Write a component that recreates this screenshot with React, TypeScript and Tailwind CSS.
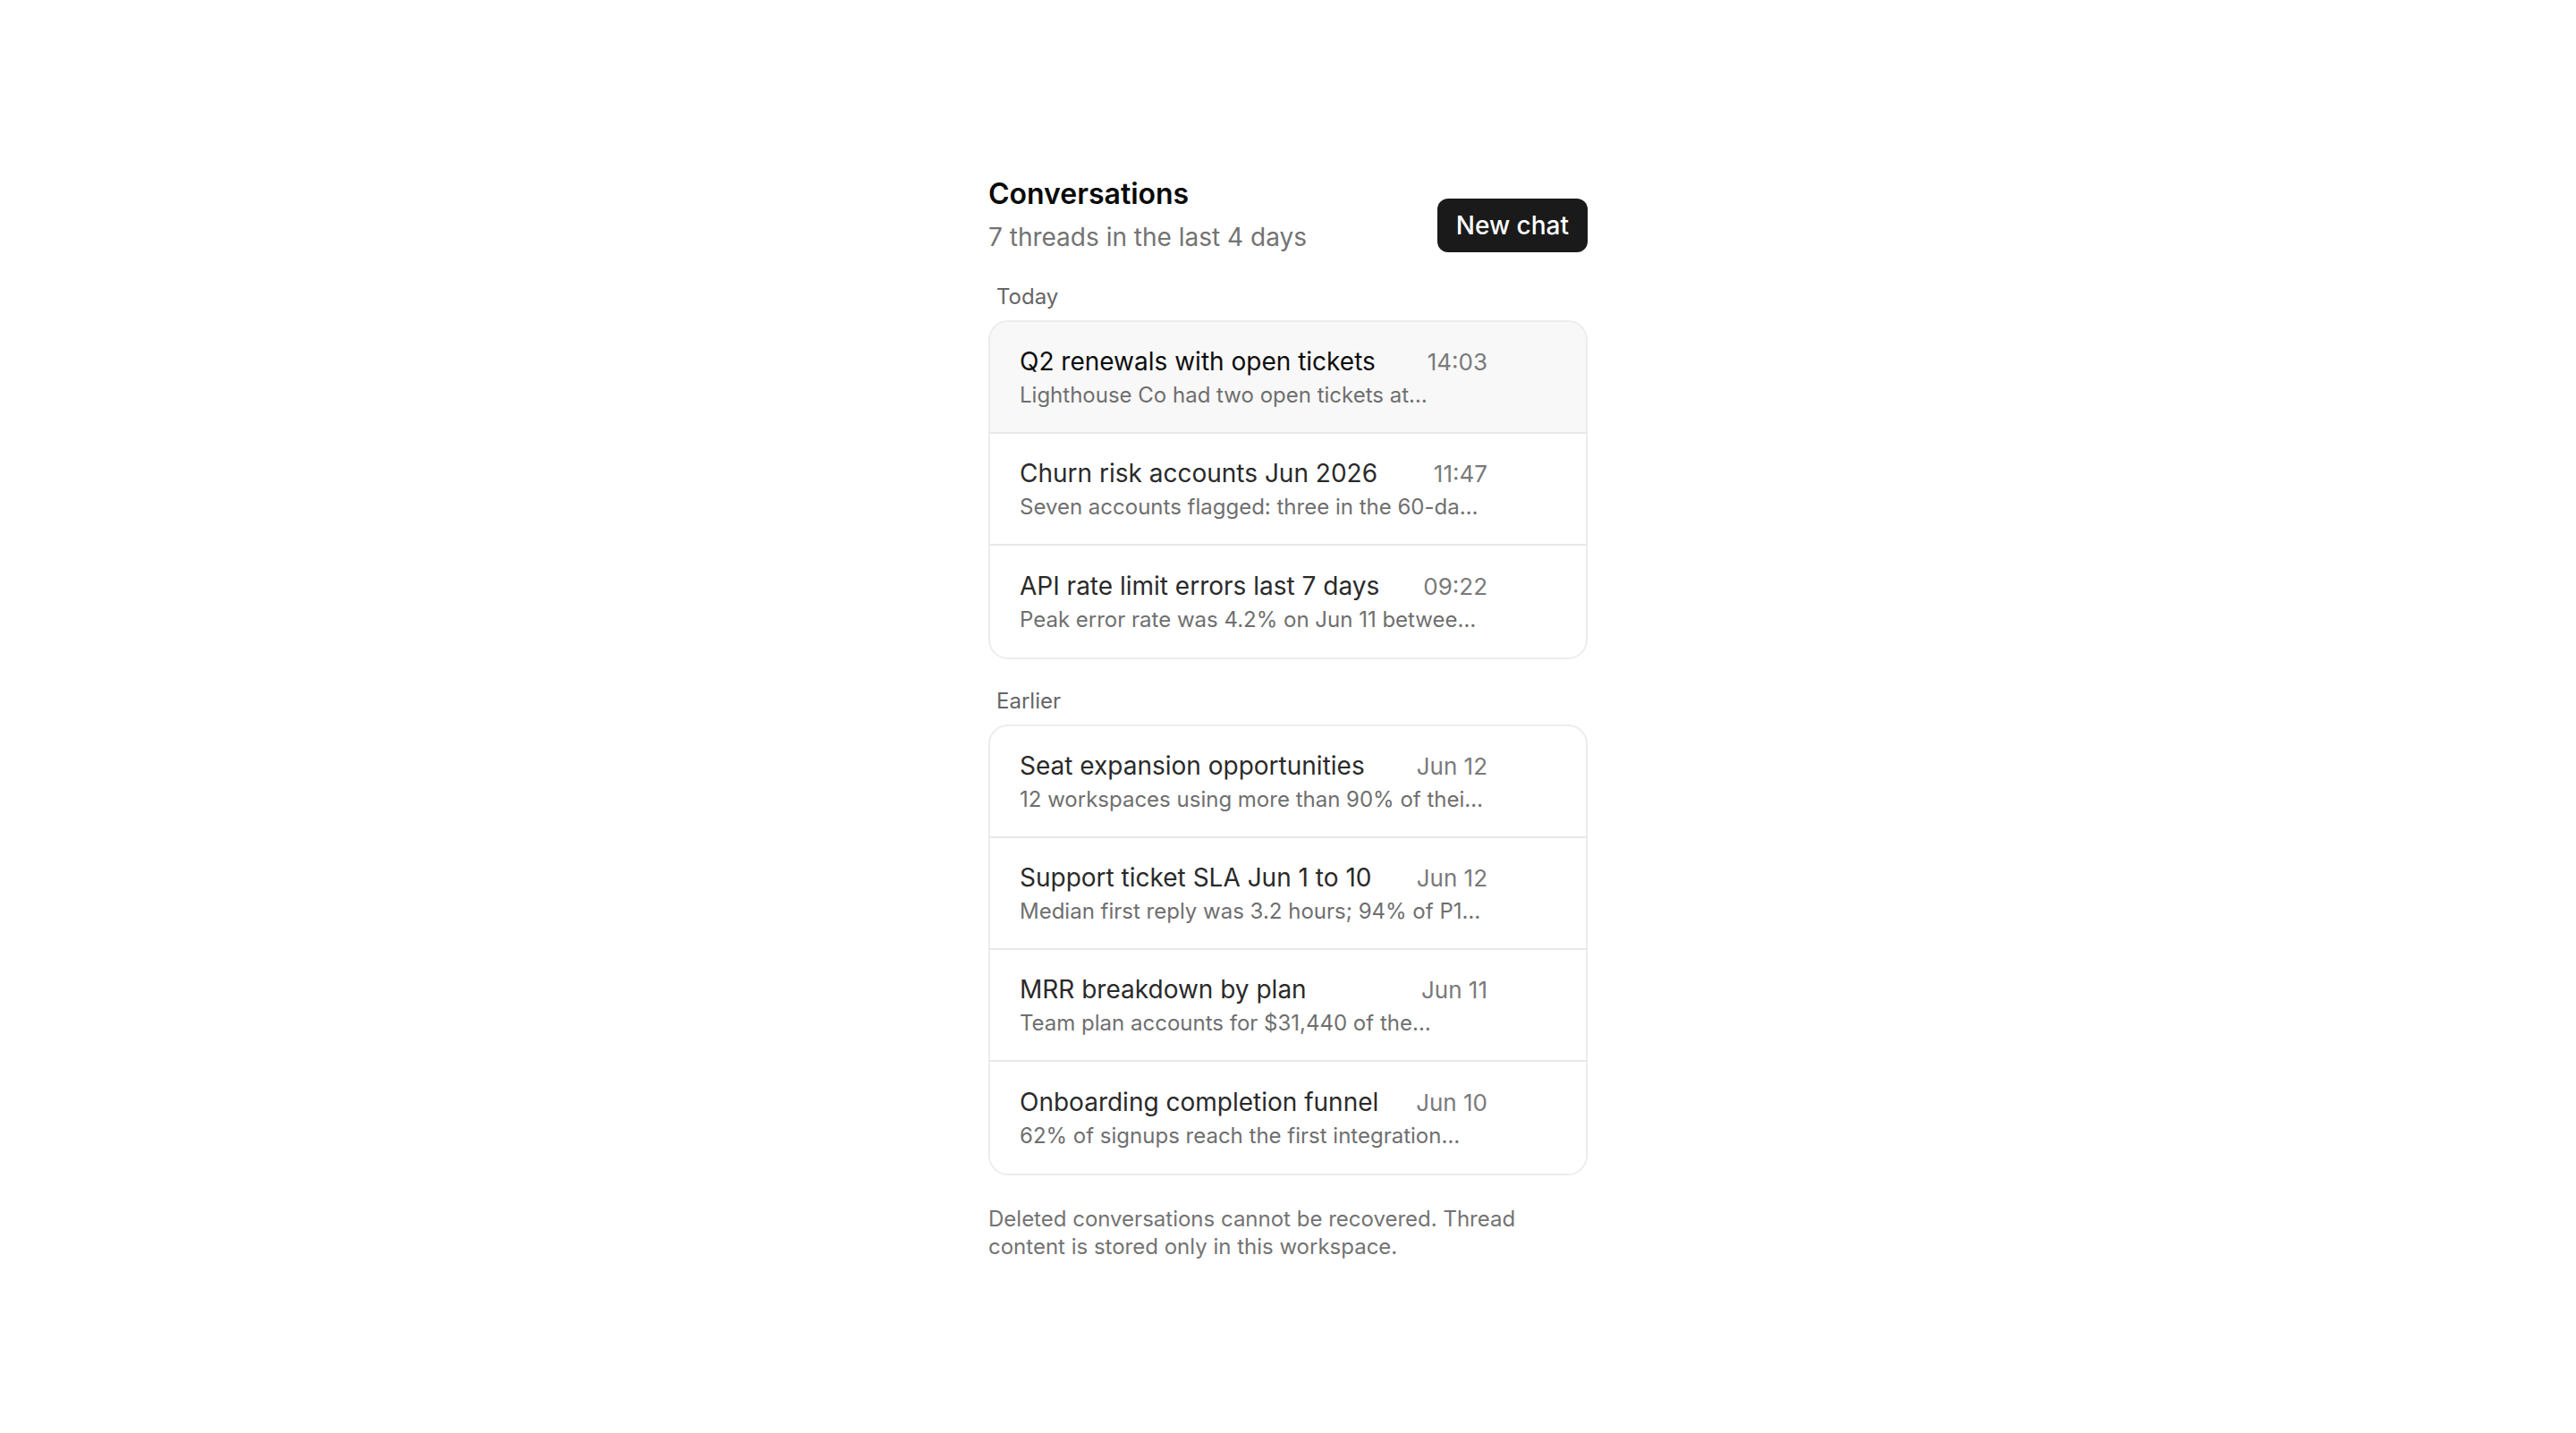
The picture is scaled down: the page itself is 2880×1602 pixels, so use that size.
import React from "react";

type Thread = { title: string; preview: string; time: string; active?: boolean };

const today: Thread[] = [
  { title: "Q2 renewals with open tickets", preview: "Lighthouse Co had two open tickets at…", time: "14:03", active: true },
  { title: "Churn risk accounts Jun 2026", preview: "Seven accounts flagged: three in the 60-da…", time: "11:47" },
  { title: "API rate limit errors last 7 days", preview: "Peak error rate was 4.2% on Jun 11 betwee…", time: "09:22" },
];

const earlier: Thread[] = [
  { title: "Seat expansion opportunities", preview: "12 workspaces using more than 90% of thei…", time: "Jun 12" },
  { title: "Support ticket SLA Jun 1 to 10", preview: "Median first reply was 3.2 hours; 94% of P1…", time: "Jun 12" },
  { title: "MRR breakdown by plan", preview: "Team plan accounts for $31,440 of the…", time: "Jun 11" },
  { title: "Onboarding completion funnel", preview: "62% of signups reach the first integration…", time: "Jun 10" },
];

function Row({ t, last }: { t: Thread; last: boolean }) {
  return (
    <div
      className={
        "flex items-center pl-[33px] pr-[110px] h-[125px] " +
        (t.active ? "bg-[#f8f8f8] " : "bg-white ") +
        (last ? "" : "border-b-2 border-[#e8e8e8]")
      }
    >
      <div className="flex-1 min-w-0 flex flex-col gap-[4px]">
        <div className="flex items-baseline justify-between gap-[20px]">
          <span
            className={
              "whitespace-nowrap text-[28px] leading-[36px] font-normal " +
              (t.active ? "text-[#0d0d0d]" : "text-[#2a2a2a]")
            }
          >
            {t.title}
          </span>
          <span className="shrink-0 whitespace-nowrap text-[26px] leading-[32px] text-[#7a7a7a]">{t.time}</span>
        </div>
        <div className="whitespace-nowrap text-[24px] leading-[32px] text-[#6f6f6f]">{t.preview}</div>
      </div>
    </div>
  );
}

function Group({ label, items }: { label: string; items: Thread[] }) {
  return (
    <div className="flex flex-col">
      <div className="pl-[9px] text-[24px] leading-[32px] text-[#666666] mb-[10px]">{label}</div>
      <div className="rounded-[22px] border-2 border-[#ececec] overflow-hidden bg-white">
        {items.map((t, i) => (
          <Row key={t.title} t={t} last={i === items.length - 1} />
        ))}
      </div>
    </div>
  );
}

export default function App() {
  return (
    <div
      className="min-h-screen w-full bg-white"
      style={{ fontFamily: "Inter, 'Noto Sans', sans-serif" }}
    >
      <div className="mx-auto w-[670px] pt-[197px] flex flex-col">
        <div className="flex items-end justify-between">
          <div className="flex flex-col">
            <h1 className="text-[32px] leading-[40px] font-semibold text-[#0a0a0a]">Conversations</h1>
            <p className="text-[28px] leading-[38px] text-[#737373] mt-[9px]">7 threads in the last 4 days</p>
          </div>
          <button className="h-[60px] px-[21px] mb-[2px] rounded-[12px] bg-[#1a1a1a] text-white text-[28px] font-medium">
            New chat
          </button>
        </div>
        <div className="mt-[32px] flex flex-col gap-[31px]">
          <Group label="Today" items={today} />
          <Group label="Earlier" items={earlier} />
        </div>
        <p className="mt-[33px] text-[24px] leading-[31px] text-[#737373]">
          Deleted conversations cannot be recovered. Thread content is stored only in this workspace.
        </p>
      </div>
    </div>
  );
}
